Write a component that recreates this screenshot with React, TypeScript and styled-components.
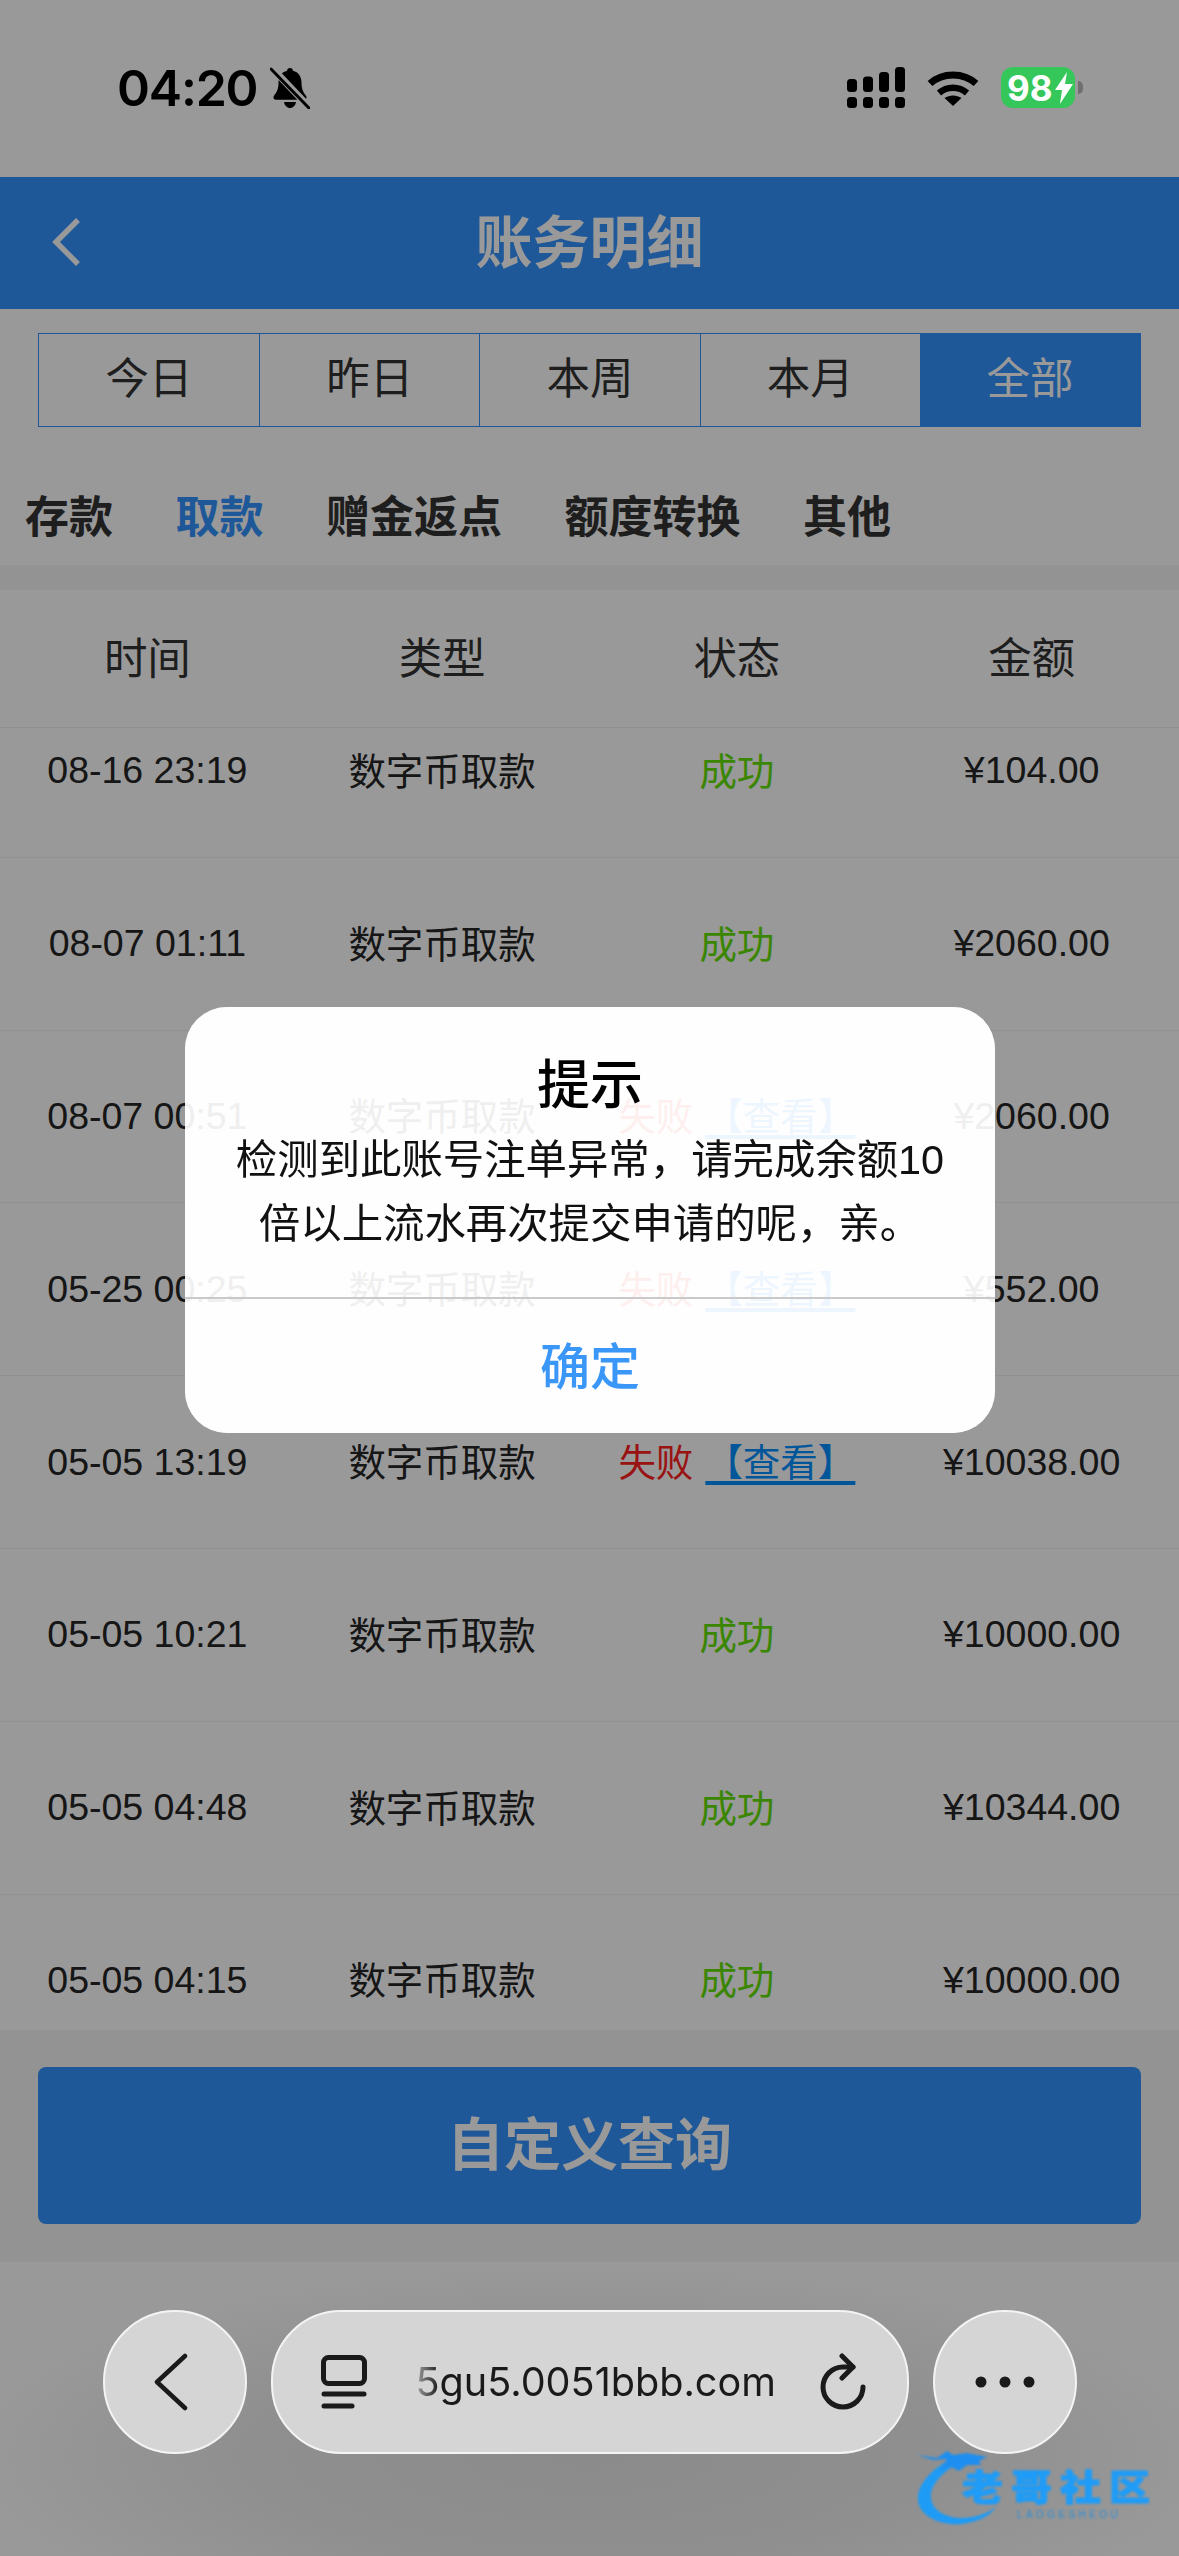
import React from 'react';
import styled, { createGlobalStyle } from 'styled-components';

const GlobalStyle = createGlobalStyle`
    html, body {
        margin: 0;
        padding: 0;
        background: #999;
    }
    * {
        box-sizing: border-box;
    }
`;

const FONT = `"Liberation Sans", "Noto Sans CJK SC", sans-serif`;
const BLUE = '#3393fd';

const Screen = styled.div`
    position: relative;
    width: 1179px;
    height: 2556px;
    overflow: hidden;
    display: flex;
    flex-direction: column;
    background: #fff;
    font-family: ${FONT};
    color: #2e2e2e;
`;
const Dim = styled.div`
    position: absolute;
    inset: 0;
    background: rgba(0, 0, 0, 0.4);
    z-index: 1;
`;
const StatusBar = styled.div`
    position: relative;
    z-index: 2;
    flex: 0 0 177px;
    display: flex;
    align-items: flex-start;
    justify-content: space-between;
    padding: 67px 104px 0 117px;
`;
const StatusLeft = styled.div`
    display: flex;
    align-items: center;
    gap: 13px;
`;
const Time = styled.div`
    font-family: Inter, sans-serif;
    font-size: 50px;
    line-height: 42px;
    font-weight: 600;
    letter-spacing: -1.2px;
    color: #000;
`;
const StatusRight = styled.div`
    display: flex;
    align-items: center;
    gap: 22px;
`;
const Battery = styled.div`
    position: relative;
    width: 74px;
    height: 41px;
    border-radius: 12px;
    background: #35c75a;
    display: flex;
    align-items: center;
    padding-left: 6px;
    gap: 1px;
    color: #fff;
    font-family: Inter, sans-serif;
    font-size: 35px;
    font-weight: 700;
    &::after {
        content: '';
        position: absolute;
        right: -8px;
        top: 14px;
        width: 5px;
        height: 13px;
        border-radius: 0 5px 5px 0;
        background: #6f6f6f;
    }
`;

const Header = styled.header`
    flex: 0 0 132px;
    display: flex;
    align-items: center;
    justify-content: center;
    position: relative;
    padding-bottom: 11px;
    background: ${BLUE};
    color: #fff;
    font-size: 57px;
    font-weight: 700;
`;
const HeaderBack = styled.svg`
    position: absolute;
    left: 50px;
    top: 40px;
`;

const RangeTabs = styled.div`
    display: grid;
    grid-template-columns: repeat(5, 1fr);
    height: 94px;
    margin: 24px 38px 0;
    border: 1.5px solid ${BLUE};
`;
const RangeTab = styled.div<{ $active?: boolean }>`
    display: flex;
    align-items: center;
    justify-content: center;
    padding-bottom: 10px;
    font-size: 43.5px;
    background: ${(p) => (p.$active ? BLUE : 'transparent')};
    color: ${(p) => (p.$active ? '#fff' : '#333')};
    border-left: ${(p) => (p.$active ? 'none' : `1px solid ${BLUE}`)};
    &:first-child {
        border-left: none;
    }
`;

const CategoryNav = styled.nav`
    flex: 0 0 138px;
    display: flex;
    gap: 62.5px;
    padding: 66px 0 0 25px;
    background: #fff;
`;
const Category = styled.div<{ $active?: boolean }>`
    font-size: 44px;
    line-height: 50px;
    font-weight: 700;
    color: ${(p) => (p.$active ? BLUE : '#333')};
`;
const Band = styled.div`
    flex: 0 0 25px;
    background: #f5f5f5;
`;

const TableHead = styled.div`
    flex: 0 0 138px;
    display: grid;
    grid-template-columns: repeat(4, 1fr);
    align-items: center;
    padding-bottom: 6px;
    text-align: center;
    font-size: 43.5px;
    color: #333;
    border-bottom: 1px solid #f0f0f0;
`;
const TableBody = styled.div`
    flex: 1 1 0;
    min-height: 0;
    overflow: hidden;
`;
const RowList = styled.div`
    margin-top: -43px;
`;
const Row = styled.div`
    height: 172.8px;
    display: grid;
    grid-template-columns: repeat(4, 1fr);
    align-items: center;
    text-align: center;
    font-size: 37.5px;
    color: #262626;
    border-bottom: 1px solid #f0f0f0;
`;
const TextCell = styled.div`
    padding-bottom: 5px;
`;
const Success = styled.span`
    color: #62e000;
`;
const Failed = styled.span`
    color: #ff2020;
`;
const ViewLink = styled.a`
    margin-left: 12px;
    color: #008fff;
    text-decoration: underline;
    text-decoration-thickness: 4px;
    text-underline-offset: 5px;
`;

const Footer = styled.div`
    flex: 0 0 232px;
    padding: 37px 38px 0;
    background: #f5f5f5;
`;
const QueryButton = styled.button`
    display: block;
    width: 100%;
    height: 157px;
    padding: 0 0 12px;
    border: none;
    border-radius: 8px;
    background: ${BLUE};
    color: #fff;
    font-family: ${FONT};
    font-size: 57px;
    font-weight: 700;
`;

const Dialog = styled.div`
    position: absolute;
    z-index: 2;
    left: 185px;
    top: 1007px;
    width: 810px;
    height: 426px;
    border-radius: 42px;
    overflow: hidden;
    background: rgba(255, 255, 255, 0.93);
    backdrop-filter: brightness(1.5);
    text-align: center;
`;
const DialogContent = styled.div`
    height: 292px;
    padding: 41px 45px 0;
    border-bottom: 2px solid #c9c9c9;
`;
const DialogTitle = styled.div`
    font-size: 53px;
    line-height: 76px;
    font-weight: 500;
    color: #000;
`;
const DialogText = styled.div`
    margin-top: 4px;
    font-size: 41.4px;
    line-height: 64px;
    color: #111;
`;
const DialogButton = styled.div`
    height: 134px;
    display: flex;
    align-items: center;
    justify-content: center;
    padding-bottom: 6px;
    font-size: 50px;
    font-weight: 500;
    color: #3a97f8;
`;

const BrowserBar = styled.div`
    position: relative;
    z-index: 2;
    flex: 0 0 294px;
    display: flex;
    justify-content: center;
    gap: 24px;
    padding-top: 48px;
    background: radial-gradient(ellipse 620px 190px at 50% 66%, #8b8b8b 0%, #8f8f8f 55%, #999 100%), #999;
`;
const RoundButton = styled.div`
    width: 144px;
    height: 144px;
    border-radius: 50%;
    display: flex;
    align-items: center;
    justify-content: center;
    background: #d5d5d5;
    border: 2.5px solid #f4f4f4;
`;
const BackGlyph = styled.svg`
    margin-right: 8px;
`;
const AddressPill = styled.div`
    width: 638px;
    height: 144px;
    border-radius: 70px;
    display: flex;
    align-items: center;
    padding: 0 40px 0 48px;
    background: #d5d5d5;
    border: 2.5px solid #f4f4f4;
`;
const Address = styled.div`
    flex: 1;
    padding-left: 49px;
    font-family: Inter, sans-serif;
    font-size: 39.6px;
    color: #1a1a1a;
    -webkit-mask-image: linear-gradient(to right, transparent 40px, #000 72px);
    mask-image: linear-gradient(to right, transparent 40px, #000 72px);
`;

const Watermark = styled.div`
    position: absolute;
    z-index: 3;
    left: 915px;
    top: 2448px;
    width: 250px;
    height: 82px;
    filter: blur(0.8px);
`;
const WatermarkName = styled.div`
    position: absolute;
    left: 47px;
    top: 25px;
    font-size: 41px;
    line-height: 37px;
    font-weight: 900;
    letter-spacing: 8px;
    white-space: nowrap;
    color: #1f9cf7;
    -webkit-text-stroke: 1px #1f9cf7;
    transform: scaleY(0.88);
    transform-origin: top left;
`;
const WatermarkSub = styled.div`
    position: absolute;
    left: 102px;
    top: 62px;
    font-size: 10px;
    line-height: 10px;
    letter-spacing: 3.4px;
    color: #2b8ed8;
`;

const RANGES = ['今日', '昨日', '本周', '本月', '全部'];
const CATEGORIES = ['存款', '取款', '赠金返点', '额度转换', '其他'];
const COLUMNS = ['时间', '类型', '状态', '金额'];
const RECORDS = [
    { time: '08-16 23:19', ok: true, amount: '¥104.00' },
    { time: '08-07 01:11', ok: true, amount: '¥2060.00' },
    { time: '08-07 00:51', ok: false, amount: '¥2060.00' },
    { time: '05-25 00:25', ok: false, amount: '¥552.00' },
    { time: '05-05 13:19', ok: false, amount: '¥10038.00' },
    { time: '05-05 10:21', ok: true, amount: '¥10000.00' },
    { time: '05-05 04:48', ok: true, amount: '¥10344.00' },
    { time: '05-05 04:15', ok: true, amount: '¥10000.00' },
];

const BellOff = () => (
    <svg width="40" height="42" viewBox="0 0 40 42">
        <path d="M20 1c1.700 0 3 1.200 3 2.800 5.500 1.400 8.500 6 8.500 12 0 6 1.500 9 4.500 13 1.200 1.700.3 4-2 4H6c-2.300 0-3.200-2.300-2-4 3-4 4.500-7 4.500-13 0-6 3-10.600 8.500-12C17 2.200 18.300 1 20 1z" fill="#000" />
        <path d="M14 35h12c-.6 3.600-3 6-6 6s-5.400-2.400-6-6z" fill="#000" />
        <path d="M2 1l38 40" stroke="#999" strokeWidth="7" />
        <path d="M1 2l38 39" stroke="#000" strokeWidth="3" strokeLinecap="round" />
    </svg>
);

const SignalIcon = () => (
    <svg width="58" height="41" viewBox="0 0 58 41" fill="#000">
        {[12, 9.5, 5, 0].map((top, i) => (
            <React.Fragment key={top}>
                <rect x={i * 16} y={top} width="10" height={25 - top} rx="3.5" />
                <rect x={i * 16} y="30" width="10" height="11" rx="3.5" />
            </React.Fragment>
        ))}
    </svg>
);

const WifiIcon = () => (
    <svg width="52" height="38" viewBox="0 0 52 38">
        <path d="M3 14.500C15.500 3 36.500 3 49 14.500" fill="none" stroke="#000" strokeWidth="7" />
        <path d="M12 24c8-7 20-7 28 0" fill="none" stroke="#000" strokeWidth="6.500" />
        <path d="M26 37l-8.500-8c5-3.500 12-3.500 17 0z" fill="#000" />
    </svg>
);

const BoltIcon = () => (
    <svg width="20" height="32" viewBox="0 0 20 32">
        <path d="M13 0L1 18h7l-2 14L19 12h-8z" fill="#fff" />
    </svg>
);

const TabsIcon = () => (
    <svg width="46" height="54" viewBox="0 0 46 54" fill="none" stroke="#1a1a1a">
        <rect x="2.500" y="2.500" width="41" height="26" rx="5" strokeWidth="5" />
        <path d="M3 39h40" strokeWidth="5" strokeLinecap="round" />
        <path d="M3 51h28" strokeWidth="5" strokeLinecap="round" />
    </svg>
);

const ReloadIcon = () => (
    <svg width="48" height="58" viewBox="0 0 48 58" fill="none" stroke="#1a1a1a" strokeWidth="5" strokeLinecap="round" strokeLinejoin="round">
        <path d="M34 14H24A20 20 0 1 0 44 34" />
        <path d="M23 3l11 11-11 11" />
    </svg>
);

const DragonMark = () => (
    <svg width="110" height="82" viewBox="0 0 110 82" style={{ position: 'absolute', left: 0, top: 0 }}>
        <path d="M38 10C14 22 2 38 3 52c1 16 22 26 44 24 16-2 28-8 34-17-10 7-22 11-34 11C30 70 17 62 16 50c-1-12 10-26 30-36z" fill="#1e9bf5" />
        <path d="M2 7l20 3 10-7 6 4 14-2 20 4-8 4 2 4-14 0-8 6-8-4-12 4 8-12-14 1z" fill="#1e8ff0" />
    </svg>
);

export default function App() {
    return (
        <Screen>
            <GlobalStyle />
            <StatusBar>
                <StatusLeft>
                    <Time>04:20</Time>
                    <BellOff />
                </StatusLeft>
                <StatusRight>
                    <SignalIcon />
                    <WifiIcon />
                    <Battery>
                        98
                        <BoltIcon />
                    </Battery>
                </StatusRight>
            </StatusBar>
            <Header>
                <HeaderBack width="32" height="50" viewBox="0 0 32 50" fill="none" stroke="#fff" strokeWidth="5.500">
                    <path d="M28 3L6 25l22 22" />
                </HeaderBack>
                账务明细
            </Header>
            <RangeTabs>
                {RANGES.map((r) => (
                    <RangeTab key={r} $active={r === '全部'}>
                        {r}
                    </RangeTab>
                ))}
            </RangeTabs>
            <CategoryNav>
                {CATEGORIES.map((c) => (
                    <Category key={c} $active={c === '取款'}>
                        {c}
                    </Category>
                ))}
            </CategoryNav>
            <Band />
            <TableHead>
                {COLUMNS.map((c) => (
                    <div key={c}>{c}</div>
                ))}
            </TableHead>
            <TableBody>
                <RowList>
                    {RECORDS.map((r) => (
                        <Row key={r.time}>
                            <div>{r.time}</div>
                            <TextCell>数字币取款</TextCell>
                            <TextCell>
                                {r.ok ? (
                                    <Success>成功</Success>
                                ) : (
                                    <>
                                        <Failed>失败</Failed>
                                        <ViewLink>【查看】</ViewLink>
                                    </>
                                )}
                            </TextCell>
                            <div>{r.amount}</div>
                        </Row>
                    ))}
                </RowList>
            </TableBody>
            <Footer>
                <QueryButton>自定义查询</QueryButton>
            </Footer>
            <BrowserBar>
                <RoundButton>
                    <BackGlyph width="34" height="58" viewBox="0 0 34 58" fill="none" stroke="#1a1a1a" strokeWidth="4.500" strokeLinecap="round" strokeLinejoin="round">
                        <path d="M31 3L3 29l28 26" />
                    </BackGlyph>
                </RoundButton>
                <AddressPill>
                    <TabsIcon />
                    <Address>5gu5.0051bbb.com</Address>
                    <ReloadIcon />
                </AddressPill>
                <RoundButton>
                    <svg width="60" height="12" viewBox="0 0 60 12" fill="#1a1a1a">
                        <circle cx="6" cy="6" r="5.500" />
                        <circle cx="30" cy="6" r="5.500" />
                        <circle cx="54" cy="6" r="5.500" />
                    </svg>
                </RoundButton>
            </BrowserBar>
            <Dim />
            <Dialog>
                <DialogContent>
                    <DialogTitle>提示</DialogTitle>
                    <DialogText>检测到此账号注单异常，请完成余额10倍以上流水再次提交申请的呢，亲。</DialogText>
                </DialogContent>
                <DialogButton>确定</DialogButton>
            </Dialog>
            <Watermark>
                <DragonMark />
                <WatermarkName>老哥社区</WatermarkName>
                <WatermarkSub>LAOGESHEOU</WatermarkSub>
            </Watermark>
        </Screen>
    );
}
